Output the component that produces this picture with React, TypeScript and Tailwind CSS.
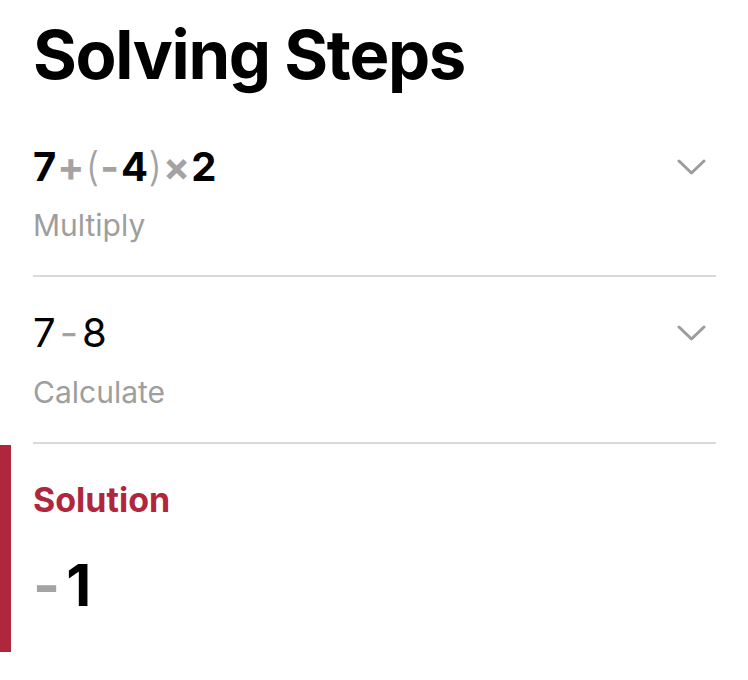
import React from 'react';

const font = { fontFamily: 'Inter, "Noto Sans", sans-serif' };

function Chevron() {
    return (
        <svg width="29" height="17" viewBox="0 0 29 17" className="mr-[10px] shrink-0">
            <polyline points="2,2 14.5,14 27,2" fill="none" stroke="#9c9c9c" strokeWidth="3" strokeLinecap="round" strokeLinejoin="round" />
        </svg>
    );
}

function Op({ children, className = '' }: { children: React.ReactNode; className?: string }) {
    return <span className={`text-[#a3a3a3] ${className}`}>{children}</span>;
}

export default function App() {
    return (
        <div className="w-[748px] h-[680px] bg-white overflow-hidden" style={font}>
            <div className="pl-[33px] pr-[32px]">
                <h1 className="pt-[21px] text-[67px] leading-none font-bold tracking-[-0.02em] text-black">
                    Solving Steps
                </h1>

                {/* Step 1 */}
                <div className="mt-[59px] flex items-center justify-between">
                    <div className="text-[40px] leading-none font-bold text-black flex items-baseline">
                        <span>7</span>
                        <Op className="mx-[1px]">+</Op>
                        <Op className="font-light">(</Op>
                        <Op className="ml-[1px] mr-[2px]">-</Op>
                        <span>4</span>
                        <Op className="font-light">)</Op>
                        <Op className="mx-[1px]">×</Op>
                        <span>2</span>
                    </div>
                    <Chevron />
                </div>
                <p className="mt-[23px] text-[30px] leading-none text-[#9e9e9e]">Multiply</p>
                <div className="mt-[35px] h-[2px] bg-[#d9d9d9]" />

                {/* Step 2 */}
                <div className="mt-[36px] flex items-center justify-between">
                    <div className="text-[40px] leading-none text-black flex items-baseline">
                        <span>7</span>
                        <Op className="mx-[4px]">-</Op>
                        <span>8</span>
                    </div>
                    <Chevron />
                </div>
                <p className="mt-[24px] text-[30px] leading-none text-[#9e9e9e]">Calculate</p>
                <div className="mt-[35px] h-[2px] bg-[#d9d9d9]" />
            </div>

            {/* Solution */}
            <div className="mt-[1px] border-l-[11px] border-[#b0263c] pl-[22px] pt-[38px] pb-[38px]">
                <p className="text-[34px] leading-none font-bold text-[#b0263c]">Solution</p>
                <div className="mt-[39px] text-[58px] leading-none font-bold text-black flex items-baseline">
                    <Op className="mr-[6px]">-</Op>
                    <span>1</span>
                </div>
            </div>
        </div>
    );
}
